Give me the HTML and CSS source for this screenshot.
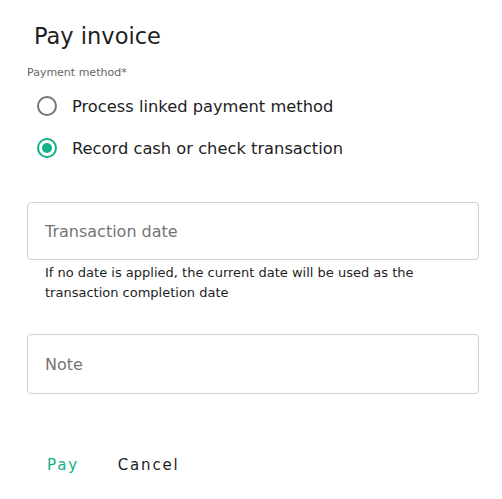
FILE: index.html
```html
<!DOCTYPE html>
<html>
<head>
<meta charset="utf-8">
<link rel="stylesheet" href="styles.css">
</head>
<body>
<div class="dialog">
  <h1 class="title">Pay invoice</h1>
  <div class="group-label">Payment method*</div>
  <div class="radios">
    <label class="radio">
      <span class="circle"></span>
      <span class="radio-text">Process linked payment method</span>
    </label>
    <label class="radio checked">
      <span class="circle"><span class="dot"></span></span>
      <span class="radio-text">Record cash or check transaction</span>
    </label>
  </div>
  <div class="field field-date">
    <span class="placeholder">Transaction date</span>
  </div>
  <p class="helper">If no date is applied, the current date will be used as the transaction completion date</p>
  <div class="field field-note">
    <span class="placeholder">Note</span>
  </div>
  <div class="actions">
    <button class="btn btn-pay">Pay</button>
    <button class="btn btn-cancel">Cancel</button>
  </div>
</div>
</body>
</html>
```
FILE: styles.css
```css
* { box-sizing: border-box; }
html, body { margin: 0; padding: 0; background: #fff; }
body { font-family: "DejaVu Sans", "Open Sans", sans-serif; color: #1e1e1e; }
.dialog { width: 502px; padding: 21px 23px 0 27px; display: flex; flex-direction: column; }
.title { margin: 0 0 0 7px; font-size: 22.5px; font-weight: 400; line-height: 30px; color: #1e1e1e; }
.group-label { margin-top: 15px; font-size: 11px; line-height: 14px; color: #666; }
.radios { display: flex; flex-direction: column; margin-top: 5px; }
.radio { display: flex; align-items: center; height: 42px; gap: 15px; padding-left: 10px; }
.circle { width: 20px; height: 20px; border: 2px solid #757575; border-radius: 50%; display: flex; align-items: center; justify-content: center; flex: none; }
.checked .circle { border-color: #14b08a; }
.dot { width: 10px; height: 10px; border-radius: 50%; background: #14b08a; }
.radio-text { font-size: 16.3px; color: #1e1e1e; }
.field { height: 58px; border: 1px solid #cfcfcf; border-radius: 4px; display: flex; align-items: center; padding-left: 17px; }
.field-date { margin-top: 33px; }
.field-note { margin-top: 31px; height: 60px; }
.placeholder { font-size: 16px; color: #757575; padding-top: 1px; }
.helper { margin: 3px 0 0 18px; font-size: 13px; line-height: 20px; color: #1e1e1e; padding-right: 20px; }
.actions { display: flex; gap: 15px; margin-top: 56px; padding-left: 8px; }
.btn { font-family: inherit; background: none; border: none; padding: 6px 12px; font-size: 15px; letter-spacing: 1.8px; color: #1e1e1e; }
.btn-pay { color: #14b08a; }
```
